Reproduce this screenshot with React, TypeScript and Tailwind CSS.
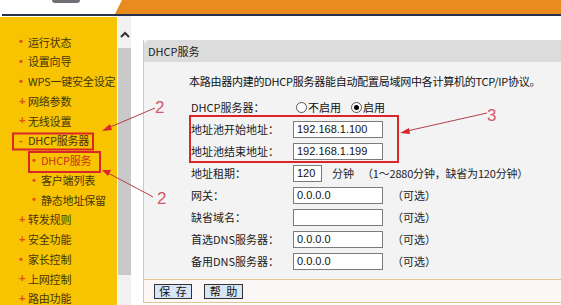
import React from 'react'

const menu = [
    { label: '运行状态', mark: '•' },
    { label: '设置向导', mark: '•' },
    { label: 'WPS一键安全设定', mark: '•' },
    { label: '网络参数', mark: '+' },
    { label: '无线设置', mark: '+' },
    { label: 'DHCP服务器', mark: '-' },
    { label: 'DHCP服务', mark: '•', sub: true, active: true },
    { label: '客户端列表', mark: '•', sub: true },
    { label: '静态地址保留', mark: '•', sub: true },
    { label: '转发规则', mark: '+' },
    { label: '安全功能', mark: '+' },
    { label: '家长控制', mark: '•' },
    { label: '上网控制', mark: '+' },
    { label: '路由功能', mark: '+' },
]

function Field({ value, w = 'w-[90px]' }: { value: string; w?: string }) {
    return (
        <div className={`${w} h-[17px] bg-white border border-[#7b7b7b] pl-[3px] flex items-center text-[11px] text-[#111] [font-family:'Liberation_Sans',sans-serif]`}>
            {value}
        </div>
    )
}

function Radio({ checked }: { checked?: boolean }) {
    return (
        <span className="w-[11px] h-[11px] rounded-full border border-[#555] bg-white flex items-center justify-center mr-[1px]">
            {checked && <span className="w-[5px] h-[5px] rounded-full bg-black" />}
        </span>
    )
}

function Row({ label, children }: { label: string; children: React.ReactNode }) {
    return (
        <div className="flex items-center h-[22px] whitespace-nowrap">
            <div className="w-[102px] text-[11px] text-[#1a1a1a]">{label}</div>
            {children}
        </div>
    )
}

const opt = <span className="ml-[9px] text-[11px] text-[#222]">（可选）</span>

export default function App() {
    return (
        <div className="relative w-[561px] h-[305px] overflow-hidden bg-white [font-family:'Noto_Sans_CJK_SC',sans-serif]">
            <div className="flex flex-col h-full">
                {/* banner */}
                <div className="flex h-[14px]">
                    <div className="w-[115px] relative">
                        <div className="ml-[52px] w-[28px] h-[3px] rounded-b-full bg-[#6f6f75]" />
                    </div>
                    <svg width="8" height="14" viewBox="0 0 8 14">
                        <polygon points="7,0 8,0 8,14 0,14" fill="#e98b1f" />
                    </svg>
                    <div className="flex-1 bg-[#e98b1f]" />
                </div>
                <div className="h-[2px] ml-[2px] bg-[#27324d]" />

                <div className="flex flex-1 min-h-0">
                    {/* sidebar */}
                    <div className="w-[117px] mt-[1px] bg-[#f8c300] pt-[15px]">
                        {menu.map((m) => (
                            <div
                                key={m.label}
                                className={`flex items-center h-[19.75px] text-[11px] whitespace-nowrap tracking-[-0.2px] ${m.sub ? 'pl-[32px]' : 'pl-[19px]'}`}
                            >
                                <span className="w-[9px] shrink-0 overflow-hidden text-[#e0521b] font-bold leading-none [font-family:'Liberation_Sans',sans-serif]">{m.mark}</span>
                                <span className={m.active ? 'text-[#c8321a]' : 'text-[#45360c]'}>{m.label}</span>
                            </div>
                        ))}
                    </div>

                    {/* scrollbar */}
                    <div className="w-[13px] ml-[1px] flex flex-col">
                        <div className="h-[32px] bg-[#f1f1f1] flex justify-center pt-[15px]">
                            <svg width="10" height="7" viewBox="0 0 10 7">
                                <path d="M1 6 L5 2 L9 6" stroke="#333" strokeWidth="2" fill="none" />
                            </svg>
                        </div>
                        <div className="h-[227px] bg-[#c9c9c9]" />
                        <div className="flex-1 bg-[#f1f1f1]" />
                    </div>

                    {/* main */}
                    <div className="flex-1 min-w-0 pl-[12px] pt-[24px] overflow-hidden">
                        <div className="w-[500px] border-l border-[#dcc79c] bg-[#f3f3f4]">
                            <div className="h-[22px] bg-[#dcdcdc] rounded-tl-[6px] pl-[4px] flex items-center text-[11px] text-[#222]">
                                DHCP服务
                            </div>
                            <div className="pt-[8px] pl-[45px] h-[22px] flex items-center text-[11px] text-[#111] box-content whitespace-nowrap tracking-[-0.25px]">
                                本路由器内建的DHCP服务器能自动配置局域网中各计算机的TCP/IP协议。
                            </div>
                            <div className="pl-[47px] pt-[4px] pb-[7px]">
                                <Row label="DHCP服务器：">
                                    <div className="flex items-center ml-[3px] text-[11px] text-[#111]">
                                        <Radio />
                                        <span>不启用</span>
                                        <span className="ml-[10px]" />
                                        <Radio checked />
                                        <span>启用</span>
                                    </div>
                                </Row>
                                <Row label="地址池开始地址：">
                                    <Field value="192.168.1.100" />
                                </Row>
                                <Row label="地址池结束地址：">
                                    <Field value="192.168.1.199" />
                                </Row>
                                <Row label="地址租期：">
                                    <Field value="120" w="w-[29px]" />
                                    <span className="ml-[10px] text-[11px] text-[#222]">分钟</span>
                                    <span className="ml-[8px] text-[11px] text-[#222] tracking-[-0.2px]">（1～2880分钟，缺省为120分钟）</span>
                                </Row>
                                <Row label="网关：">
                                    <Field value="0.0.0.0" />
                                    {opt}
                                </Row>
                                <Row label="缺省域名：">
                                    <Field value="" />
                                    {opt}
                                </Row>
                                <Row label="首选DNS服务器：">
                                    <Field value="0.0.0.0" />
                                    {opt}
                                </Row>
                                <Row label="备用DNS服务器：">
                                    <Field value="0.0.0.0" />
                                    {opt}
                                </Row>
                            </div>
                            <div className="h-[24px] border-t border-b border-[#e0c890] bg-[#faf7f6] flex items-center pl-[10px] gap-[12px]">
                                <button className="w-[38px] h-[15px] bg-[#d7e5f6] border border-[#333] text-[11px] leading-none text-[#111]">保{'\u2002'}存</button>
                                <button className="w-[39px] h-[15px] bg-[#d7e5f6] border border-[#333] text-[11px] leading-none text-[#111]">帮{'\u2002'}助</button>
                            </div>
                        </div>
                    </div>
                </div>
            </div>

            {/* annotations */}
            <svg className="absolute inset-0 pointer-events-none" width="561" height="305" viewBox="0 0 561 305">
                <rect x="13" y="133.5" width="80" height="16" fill="none" stroke="#d8262a" strokeWidth="2" />
                <rect x="29" y="152" width="71" height="20" fill="none" stroke="#d8262a" strokeWidth="2" />
                <rect x="190" y="116" width="208" height="46" fill="none" stroke="#d8262a" strokeWidth="2" />

                <path d="M155 108 L108 128" stroke="#b2404c" strokeWidth="1" fill="none" />
                <polygon points="102,131 110,124 112,130" fill="#d8262a" />
                <text x="155" y="113" fontSize="17" fill="#d0586a" fontFamily="Liberation Sans, sans-serif">2</text>

                <path d="M153 197 Q 148 194 140 190 L108 173" stroke="#b2404c" strokeWidth="1" fill="none" />
                <polygon points="102,170 111,170 108,176" fill="#d8262a" />
                <text x="157" y="204" fontSize="17" fill="#d0586a" fontFamily="Liberation Sans, sans-serif">2</text>

                <path d="M487 113 L407 131" stroke="#b2404c" strokeWidth="1" fill="none" />
                <polygon points="400,133 409,128 410,134" fill="#d8262a" />
                <text x="487" y="121" fontSize="17" fill="#d0586a" fontFamily="Liberation Sans, sans-serif">3</text>
            </svg>
        </div>
    )
}
